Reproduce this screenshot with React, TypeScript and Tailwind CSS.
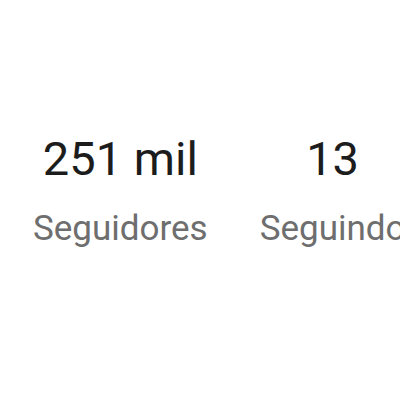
export default function App() {
  return (
    <div className="w-[400px] h-[400px] bg-white overflow-hidden" style={{ fontFamily: "Roboto, 'Noto Sans', sans-serif" }}>
      <div className="flex gap-[52px] pl-[33px] pt-[135px] whitespace-nowrap">
        <Stat value="251 mil" label="Seguidores" />
        <Stat value="13" label="Seguindo" />
      </div>
    </div>
  );
}

function Stat({ value, label }: { value: string; label: string }) {
  return (
    <div className="flex flex-col items-center">
      <span className="text-[47px] leading-[48px] text-[#1c1c1c]">{value}</span>
      <span className="mt-[28px] text-[35px] leading-[36px] text-[#6e6e6e]">{label}</span>
    </div>
  );
}
